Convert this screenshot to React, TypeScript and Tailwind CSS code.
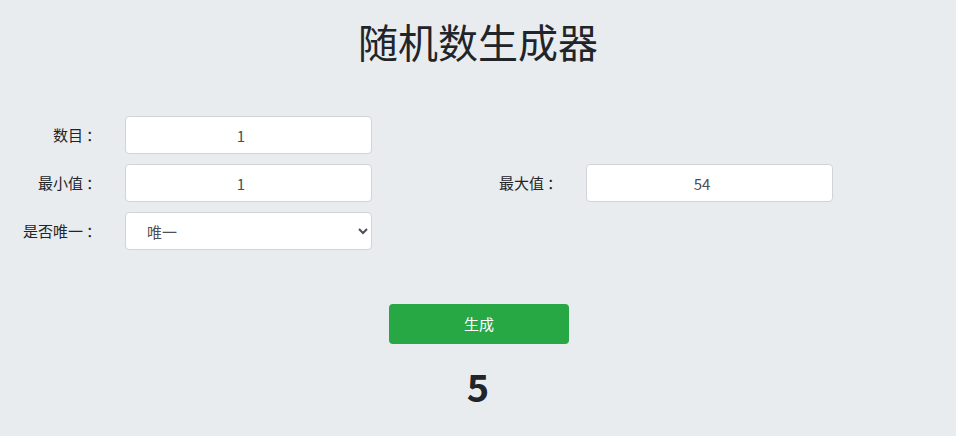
import { useState } from 'react';

const font = { fontFamily: '"Noto Sans CJK SC", "Noto Sans", sans-serif' };

function Label({ text }: { text: string }) {
  return (
    <label className="w-[125px] pr-[24px] text-right text-[15px] text-[#212529]">
      {text}
      <span className="ml-[3px]">：</span>
    </label>
  );
}

function Field({ label, value, onChange }: { label: string; value: string; onChange: (v: string) => void }) {
  return (
    <div className="flex items-center">
      <Label text={label} />
      <input
        type="number"
        className="h-[38px] w-[247px] rounded-[4px] border border-[#ced4da] bg-white px-3 text-center text-[15px] text-[#495057] outline-none"
        value={value}
        onChange={(e) => onChange(e.target.value)}
      />
    </div>
  );
}

export default function App() {
  const [count, setCount] = useState('1');
  const [min, setMin] = useState('1');
  const [max, setMax] = useState('54');
  const [unique, setUnique] = useState('唯一');
  const [result, setResult] = useState('5');

  const generate = () => {
    const lo = parseInt(min) || 0;
    const hi = parseInt(max) || 0;
    const n = parseInt(count) || 1;
    const out: number[] = [];
    for (let i = 0; i < n; i++) {
      out.push(Math.floor(Math.random() * (hi - lo + 1)) + lo);
    }
    setResult(out.join(', '));
  };

  return (
    <div className="min-h-screen w-full bg-[#e9ecef] text-[#212529]" style={font}>
      {/* Title */}
      <h1 className="pt-[13px] text-center text-[40px] font-normal leading-[56px]">随机数生成器</h1>

      {/* Form */}
      <div className="mt-[47px] flex flex-col gap-[10px]">
        <Field label="数目" value={count} onChange={setCount} />
        <div className="flex items-center">
          <Field label="最小值" value={min} onChange={setMin} />
          <div className="ml-[89px]">
            <Field label="最大值" value={max} onChange={setMax} />
          </div>
        </div>
        <div className="flex items-center">
          <Label text="是否唯一" />
          <select
            className="h-[38px] w-[247px] rounded-[4px] border border-[#ced4da] bg-white pl-[17px] text-[15px] text-[#495057] outline-none"
            value={unique}
            onChange={(e) => setUnique(e.target.value)}
          >
            <option>唯一</option>
            <option>不唯一</option>
          </select>
        </div>
      </div>

      {/* Action */}
      <div className="mt-[54px] flex justify-center">
        <button
          onClick={generate}
          className="ml-[2px] h-[40px] w-[180px] rounded-[4px] bg-[#28a745] text-[15px] text-white"
        >
          生成
        </button>
      </div>

      <div className="mt-[18px] text-center text-[38px] font-semibold leading-[48px]">{result}</div>
    </div>
  );
}
